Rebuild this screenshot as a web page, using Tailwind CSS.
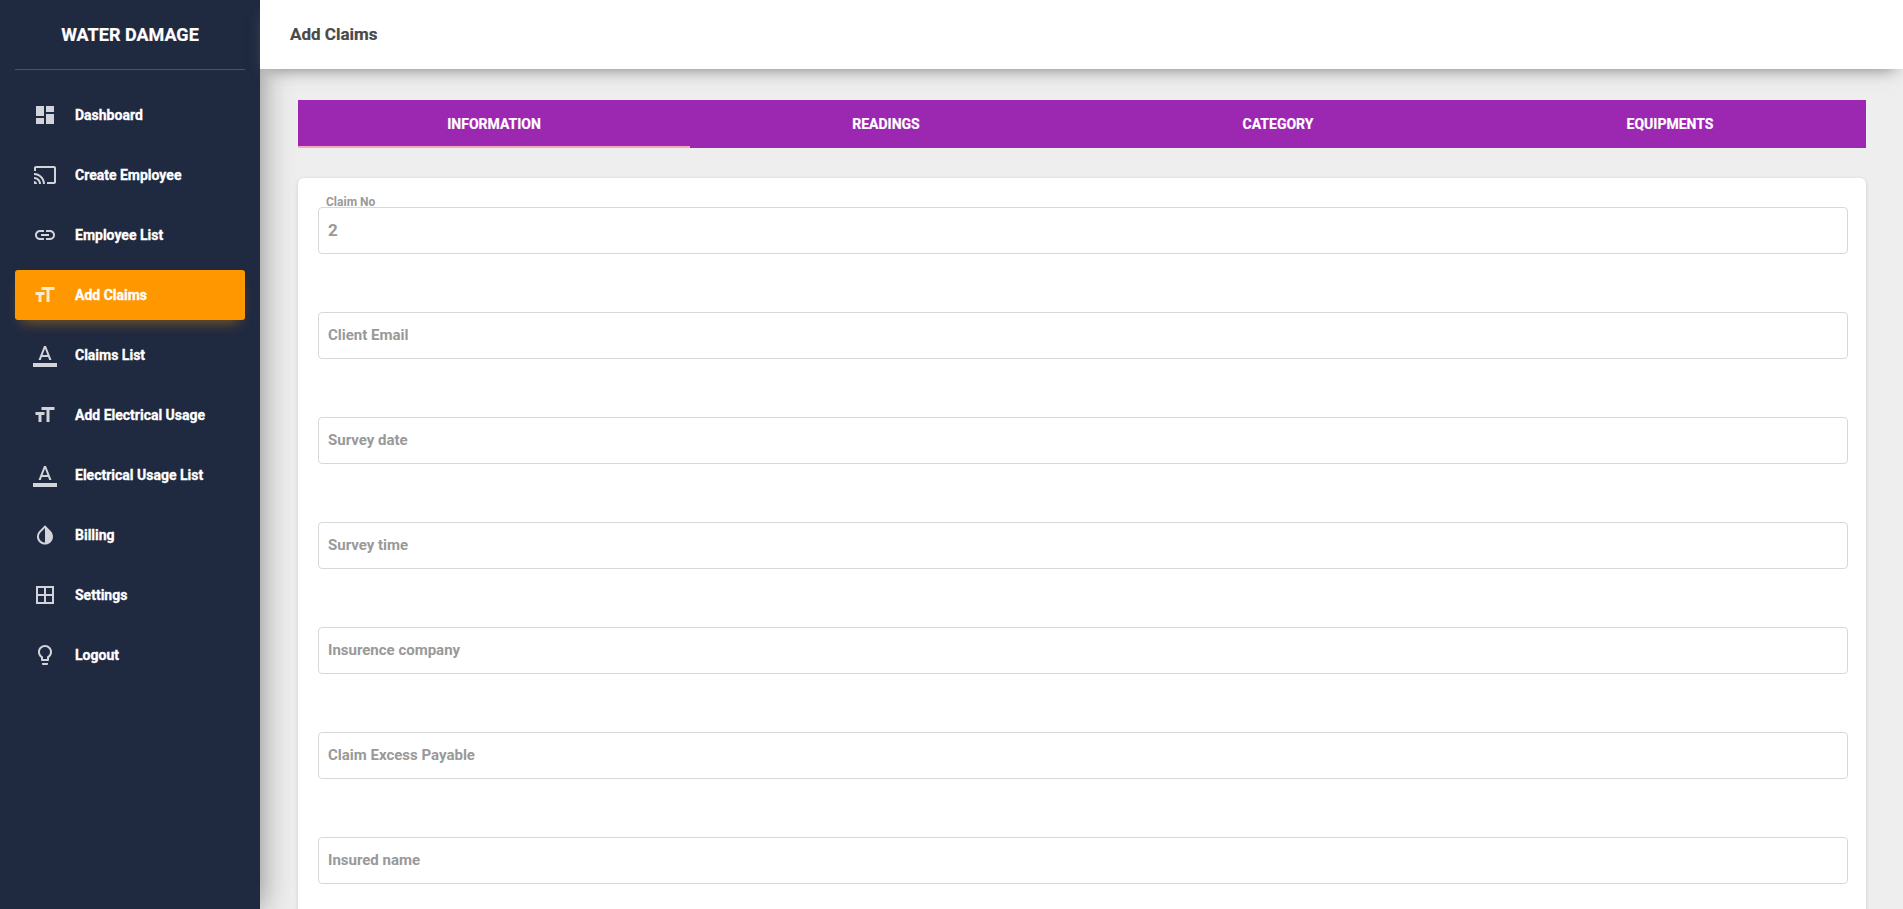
<!DOCTYPE html>
<html lang="en">
<head>
  <meta charset="UTF-8" />
  <title>Add Claims</title>
  <script src="https://cdn.jsdelivr.net/npm/@tailwindcss/browser@4"></script>
</head>
<body class="h-screen overflow-hidden bg-[#eeeeee] font-['Roboto',sans-serif]">
  <div class="flex h-full">

    <!-- Sidebar -->
    <aside class="relative z-10 w-[260px] shrink-0 bg-[#1f2940] text-white shadow-[0_0_30px_rgba(0,0,0,0.45)]">
      <div class="mx-[15px] flex h-[70px] items-center justify-center border-b border-white/20 text-[18px] font-bold [-webkit-text-stroke:0.2px]">WATER DAMAGE</div>
      <nav class="mx-[15px] mt-5 flex flex-col gap-2.5 text-[14px] font-bold [-webkit-text-stroke:0.3px]">
        <a class="flex h-[50px] items-center gap-[18px] rounded-[3px] pl-[18px]">
          <svg class="h-6 w-6 fill-white/80" viewBox="0 0 24 24"><path d="M3 13h8V3H3v10zm0 8h8v-6H3v6zm10 0h8V11h-8v10zm0-18v6h8V3h-8z"/></svg>
          Dashboard
        </a>
        <a class="flex h-[50px] items-center gap-[18px] rounded-[3px] pl-[18px]">
          <svg class="h-6 w-6 fill-white/80" viewBox="0 0 24 24"><path d="M21 3H3c-1.1 0-2 .9-2 2v3h2V5h18v14h-7v2h7c1.1 0 2-.9 2-2V5c0-1.1-.9-2-2-2zM1 18v3h3c0-1.66-1.34-3-3-3zm0-4v2c2.76 0 5 2.24 5 5h2c0-3.87-3.13-7-7-7zm0-4v2c4.97 0 9 4.03 9 9h2c0-6.08-4.93-11-11-11z"/></svg>
          Create Employee
        </a>
        <a class="flex h-[50px] items-center gap-[18px] rounded-[3px] pl-[18px]">
          <svg class="h-6 w-6 fill-white/80" viewBox="0 0 24 24"><path d="M3.9 12c0-1.71 1.39-3.1 3.1-3.1h4V7H7c-2.76 0-5 2.24-5 5s2.24 5 5 5h4v-1.9H7c-1.71 0-3.1-1.39-3.1-3.1zM8 13h8v-2H8v2zm9-6h-4v1.9h4c1.71 0 3.1 1.39 3.1 3.1s-1.39 3.1-3.1 3.1h-4V17h4c2.76 0 5-2.24 5-5s-2.24-5-5-5z"/></svg>
          Employee List
        </a>
        <a class="flex h-[50px] items-center gap-[18px] rounded-[3px] bg-[#ff9800] pl-[18px] shadow-[0_8px_14px_-6px_rgba(255,152,0,0.45)]">
          <svg class="h-6 w-6 fill-white/80" viewBox="0 0 24 24"><path d="M21.5 4v3h-5v12h-3V7h-5V4h13zm-19 5h9v3h-3v7h-3v-7h-3V9z"/></svg>
          Add Claims
        </a>
        <a class="flex h-[50px] items-center gap-[18px] rounded-[3px] pl-[18px]">
          <svg class="h-6 w-6 fill-white/80" viewBox="0 0 24 24"><path d="M0 20h24v4H0z"/><path d="M11 3L5.5 17h2.25l1.12-3h6.25l1.12 3h2.25L13 3h-2zm-1.38 9L12 5.67 14.38 12H9.62z"/></svg>
          Claims List
        </a>
        <a class="flex h-[50px] items-center gap-[18px] rounded-[3px] pl-[18px]">
          <svg class="h-6 w-6 fill-white/80" viewBox="0 0 24 24"><path d="M21.5 4v3h-5v12h-3V7h-5V4h13zm-19 5h9v3h-3v7h-3v-7h-3V9z"/></svg>
          Add Electrical Usage
        </a>
        <a class="flex h-[50px] items-center gap-[18px] rounded-[3px] pl-[18px]">
          <svg class="h-6 w-6 fill-white/80" viewBox="0 0 24 24"><path d="M0 20h24v4H0z"/><path d="M11 3L5.5 17h2.25l1.12-3h6.25l1.12 3h2.25L13 3h-2zm-1.38 9L12 5.67 14.38 12H9.62z"/></svg>
          Electrical Usage List
        </a>
        <a class="flex h-[50px] items-center gap-[18px] rounded-[3px] pl-[18px]">
          <svg class="h-6 w-6 fill-white/80" viewBox="0 0 24 24"><path d="M17.66 7.93L12 2.27 6.34 7.93c-3.12 3.12-3.12 8.19 0 11.31C7.9 20.8 9.95 21.58 12 21.58c2.05 0 4.1-.78 5.66-2.34 3.12-3.12 3.12-8.19 0-11.31zM12 19.59c-1.6 0-3.11-.62-4.24-1.76C6.62 16.69 6 15.19 6 13.59s.62-3.11 1.76-4.24L12 5.1v14.49z"/></svg>
          Billing
        </a>
        <a class="flex h-[50px] items-center gap-[18px] rounded-[3px] pl-[18px]">
          <svg class="h-6 w-6 fill-white/80" viewBox="0 0 24 24"><path d="M3 3v18h18V3H3zm8 16H5v-6h6v6zm0-8H5V5h6v6zm8 8h-6v-6h6v6zm0-8h-6V5h6v6z"/></svg>
          Settings
        </a>
        <a class="flex h-[50px] items-center gap-[18px] rounded-[3px] pl-[18px]">
          <svg class="h-6 w-6 fill-white/80" viewBox="0 0 24 24"><path d="M9 21c0 .55.45 1 1 1h4c.55 0 1-.45 1-1v-1H9v1zm3-19C8.14 2 5 5.14 5 9c0 2.38 1.19 4.47 3 5.74V17c0 .55.45 1 1 1h6c.55 0 1-.45 1-1v-2.26c1.81-1.27 3-3.36 3-5.74 0-3.86-3.14-7-7-7zm2.85 11.1l-.85.6V16h-4v-2.3l-.85-.6C7.8 12.16 7 10.63 7 9c0-2.76 2.24-5 5-5s5 2.24 5 5c0 1.63-.8 3.16-2.15 4.1z"/></svg>
          Logout
        </a>
      </nav>
    </aside>

    <!-- Main -->
    <main class="min-w-0 flex-1">
      <header class="relative z-20 flex h-[69px] items-center bg-white pl-[30px] text-[17px] font-bold text-[#4a4a4a] shadow-[0_8px_16px_-8px_rgba(120,120,120,1)] [-webkit-text-stroke:0.2px]">Add Claims</header>

      <div class="pl-[38px] pr-[37px] pt-[31px]">
        <!-- Tabs -->
        <div class="grid h-[48px] grid-cols-4 bg-[#9c27b0] text-[14px] font-bold uppercase text-white [-webkit-text-stroke:0.2px]">
          <div class="flex items-center justify-center border-y-2 border-t-transparent border-b-[#f5a9bc]">Information</div>
          <div class="flex items-center justify-center">Readings</div>
          <div class="flex items-center justify-center">Category</div>
          <div class="flex items-center justify-center">Equipments</div>
        </div>

        <!-- Form card -->
        <div class="mt-[30px] flex flex-col gap-[58px] rounded-md bg-white pb-10 pl-5 pr-[18px] pt-[29px] shadow-[0_1px_4px_rgba(0,0,0,0.14)]">
          <div class="relative">
            <label class="absolute -top-[12px] left-[8px] text-[12px] font-bold leading-[14px] text-[#999999]">Claim No</label>
            <input value="2" class="block h-[47px] w-full rounded border border-[#d8d8d8] pb-0.5 pl-[9px] pr-2 text-[17px] font-bold text-[#999999]" />
          </div>
          <div class="relative">
            <label class="absolute left-[10px] top-[14px] text-[15px] font-bold leading-[18px] text-[#999999]">Client Email</label>
            <input class="block h-[47px] w-full rounded border border-[#d8d8d8] px-2" />
          </div>
          <div class="relative">
            <label class="absolute left-[10px] top-[14px] text-[15px] font-bold leading-[18px] text-[#999999]">Survey date</label>
            <input class="block h-[47px] w-full rounded border border-[#d8d8d8] px-2" />
          </div>
          <div class="relative">
            <label class="absolute left-[10px] top-[14px] text-[15px] font-bold leading-[18px] text-[#999999]">Survey time</label>
            <input class="block h-[47px] w-full rounded border border-[#d8d8d8] px-2" />
          </div>
          <div class="relative">
            <label class="absolute left-[10px] top-[14px] text-[15px] font-bold leading-[18px] text-[#999999]">Insurence company</label>
            <input class="block h-[47px] w-full rounded border border-[#d8d8d8] px-2" />
          </div>
          <div class="relative">
            <label class="absolute left-[10px] top-[14px] text-[15px] font-bold leading-[18px] text-[#999999]">Claim Excess Payable</label>
            <input class="block h-[47px] w-full rounded border border-[#d8d8d8] px-2" />
          </div>
          <div class="relative">
            <label class="absolute left-[10px] top-[14px] text-[15px] font-bold leading-[18px] text-[#999999]">Insured name</label>
            <input class="block h-[47px] w-full rounded border border-[#d8d8d8] px-2" />
          </div>
        </div>
      </div>
    </main>
  </div>
</body>
</html>
